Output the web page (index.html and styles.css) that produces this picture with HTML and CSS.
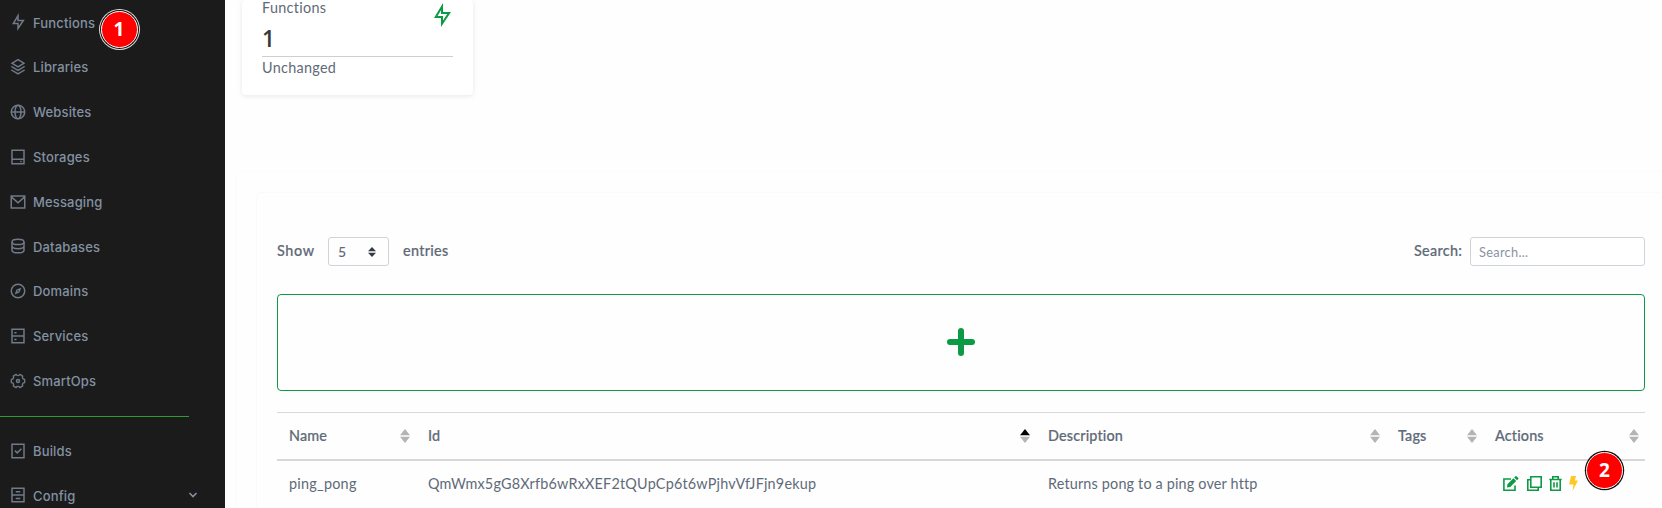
FILE: index.html
```
<!DOCTYPE html>
<html lang="en">
<head>
<meta charset="utf-8">
<title>Functions</title>
<link rel="stylesheet" href="styles.css">
</head>
<body>
<div class="app">
  <nav class="sidebar">
    <a class="item"><svg class="ico" viewBox="0 0 24 24"><path class="fill" d="M13 9h8L11 24v-9H4l9-15v9zm-2 2V7.22L7.532 13H13v4.394L17.263 11H11z"/></svg><span>Functions</span></a>
    <a class="item"><svg class="ico" viewBox="0 0 24 24"><path class="fill" d="M20.083 15.2l1.202.721a.5.5 0 0 1 0 .858l-8.77 5.262a1 1 0 0 1-1.03 0l-8.77-5.262a.5.5 0 0 1 0-.858l1.202-.721L12 20.05l8.083-4.85zm0-4.7l1.202.721a.5.5 0 0 1 0 .858L12 17.65l-9.285-5.571a.5.5 0 0 1 0-.858l1.202-.721L12 15.35l8.083-4.85zm-7.569-9.191l8.771 5.262a.5.5 0 0 1 0 .858L12 13 2.715 7.429a.5.5 0 0 1 0-.858l8.77-5.262a1 1 0 0 1 1.03 0zM12 3.332L5.887 7 12 10.668 18.113 7 12 3.332z"/></svg><span>Libraries</span></a>
    <a class="item"><svg class="ico" viewBox="0 0 24 24"><circle cx="12" cy="12" r="9"/><ellipse cx="12" cy="12" rx="4" ry="9"/><path d="M3 12h18"/></svg><span>Websites</span></a>
    <a class="item"><svg class="ico" viewBox="0 0 24 24"><path d="M4 3h16v18H4zM4 15h16M15 18h2"/></svg><span>Storages</span></a>
    <a class="item"><svg class="ico" viewBox="0 0 24 24"><path d="M3 4h18v16H3zM3.500 5.500L12 13l8.500-7.500"/></svg><span>Messaging</span></a>
    <a class="item"><svg class="ico" viewBox="0 0 24 24"><ellipse cx="12" cy="6.500" rx="8" ry="3.500"/><path d="M4 6.500v11C4 19.500 7.500 21 12 21s8-1.500 8-3.500v-11M4 12c0 2 3.500 3.500 8 3.500s8-1.500 8-3.500"/></svg><span>Databases</span></a>
    <a class="item"><svg class="ico" viewBox="0 0 24 24"><circle cx="12" cy="12" r="9"/><path class="fill" fill-rule="evenodd" d="M16.500 7.500L14 14l-6.500 2.500L10 10zM12 11a1 1 0 1 0 0 2 1 1 0 0 0 0-2z"/></svg><span>Domains</span></a>
    <a class="item"><svg class="ico" viewBox="0 0 24 24"><path d="M4 3h16v18H4zM4 12h16M7 7.500h3M7 16.500h3"/></svg><span>Services</span></a>
    <a class="item"><svg class="ico" viewBox="0 0 24 24"><path transform="translate(1.200 1.200) scale(.9)" d="M2 12c0-.865.11-1.703.316-2.504A3 3 0 0 0 4.99 4.867a9.99 9.99 0 0 1 4.335-2.505 3 3 0 0 0 5.348 0 9.99 9.99 0 0 1 4.335 2.505 3 3 0 0 0 2.675 4.63c.206.8.316 1.638.316 2.503 0 .865-.11 1.703-.316 2.504a3 3 0 0 0-2.675 4.629 9.99 9.99 0 0 1-4.335 2.505 3 3 0 0 0-5.348 0 9.99 9.99 0 0 1-4.335-2.505 3 3 0 0 0-2.675-4.63C2.11 13.704 2 12.866 2 12z"/><circle cx="12" cy="12" r="2"/></svg><span>SmartOps</span></a>
    <div class="rule"></div>
    <a class="item"><svg class="ico" viewBox="0 0 24 24"><path d="M4 3h16v18H4zM8 11.500l3 3 5.500-5.500"/></svg><span>Builds</span></a>
    <a class="item"><svg class="ico" viewBox="0 0 24 24"><path d="M4 3h16v18H4zM4 12h16M9 7.500h6M9 16.500h6"/></svg><span>Config</span><svg class="chev" viewBox="0 0 10 6"><path d="M1.500 1l3.500 3.500L8.500 1"/></svg></a>
  </nav>
  <main class="content">
    <section class="stat">
      <div class="stat-top">
        <div><div class="stat-name">Functions</div><div class="stat-num">1</div></div>
        <svg class="stat-ico" viewBox="0 0 24 24"><path d="M13 9h8L11 24v-9H4l9-15v9zm-2 2V7.22L7.532 13H13v4.394L17.263 11H11z"/></svg>
      </div>
      <div class="stat-foot">Unchanged</div>
    </section>
    <section class="outer"><div class="panel">
      <div class="controls">
        <span class="show">Show</span>
        <div class="select"><span>5</span><svg viewBox="0 0 8 10"><path d="M4 0l4 4.200H0zM4 10l4-4.200H0z"/></svg></div>
        <span class="entries">entries</span>
        <label class="search-label" for="q">Search:</label>
        <input id="q" class="search" placeholder="Search...">
      </div>
      <button class="add" aria-label="Add"><svg viewBox="0 0 28 28"><path d="M14 3v22M3 14h22"/></svg></button>
      <div class="row head">
        <div><span>Name</span><svg class="sort" viewBox="0 0 10 14"><path d="M5 0l5 6.300H0zM5 14l5-6.300H0z"/></svg></div>
        <div><span>Id</span><svg class="sort" viewBox="0 0 10 14"><path class="on" d="M5 0l5 6.300H0z"/><path d="M5 14l5-6.300H0z"/></svg></div>
        <div><span>Description</span><svg class="sort" viewBox="0 0 10 14"><path d="M5 0l5 6.300H0zM5 14l5-6.300H0z"/></svg></div>
        <div><span>Tags</span><svg class="sort" viewBox="0 0 10 14"><path d="M5 0l5 6.300H0zM5 14l5-6.300H0z"/></svg></div>
        <div><span>Actions</span><svg class="sort" viewBox="0 0 10 14"><path d="M5 0l5 6.300H0zM5 14l5-6.300H0z"/></svg></div>
      </div>
      <div class="row body">
        <div><span class="v-name">ping_pong</span></div>
        <div><span class="v-id">QmWmx5gG8Xrfb6wRxXEF2tQUpCp6t6wPjhvVfJFjn9ekup</span></div>
        <div><span class="v-desc">Returns pong to a ping over http</span></div>
        <div></div>
        <div class="actions">
          <svg class="a-edit" viewBox="0 0 17 16"><path class="line" d="M9 3H1.900v11.200H13V9.500"/><path d="M5 11.500l.4-3.200 6-6 2.800 2.800-6 6zM12.200 1.500L13.500.3q.5-.4 1 0l1.800 1.700q.4.500 0 1L15 4.300z"/></svg>
          <svg class="a-copy" viewBox="0 0 15 15"><path class="line" d="M3.800.8h10.400v10.400H3.800zM3.500 3.800H.8v10.400h10.400v-2.700"/></svg>
          <svg class="a-trash" viewBox="0 0 13 15"><path class="line" d="M.3 3.500h12.400M1.800 3.500v10.700h9.400V3.500M3.800 3V.8h5.400V3M5 6.300v5.200M8 6.300v5.200"/></svg>
          <svg class="a-bolt" viewBox="0 0 9 15"><path d="M2 0h5L5.800 4.500H9L3.500 15l1-6.500H.2z"/></svg>
        </div>
      </div>
    </div></section>
  </main>
  <div class="pin pin-one">1</div>
  <div class="pin pin-two">2</div>
</div>
</body>
</html>
```
FILE: styles.css
```
* { box-sizing: border-box; }
body { margin: 0; background: #fefefe; font-family: Lato, "Open Sans", sans-serif; font-size: 14.4px; color: #5f6b78; }
.app { position: relative; display: flex; width: 1662px; height: 508px; overflow: hidden; }
.sidebar { width: 225px; flex: none; background: #1b1b1b; font-family: Inter, sans-serif; font-size: 13px; font-weight: 500; letter-spacing: .15px; color: #8391a2; }
.item { display: flex; align-items: center; height: 44.8px; padding-left: 9px; }
.item span { padding-top: .5px; }
.ico { width: 18px; height: 18px; margin-right: 6px; fill: none; stroke: #707a88; stroke-width: 2; }
.ico .fill { fill: #707a88; stroke: none; }
.rule { width: 189px; height: 1px; margin: 12.800px 0 11.200px; background: #2f9e2f; }
.chev { width: 10px; height: 6px; margin-left: auto; margin-right: 27px; fill: none; stroke: #8391a2; stroke-width: 1.600; }
.content { flex: 1; min-width: 0; }
.stat { width: 231px; height: 95px; margin-left: 17px; padding: 0 20px; background: #fff; border-radius: 4px; box-shadow: 0 1px 5px rgba(90,100,110,.14); }
.stat-top { display: flex; justify-content: space-between; height: 57px; border-bottom: 1px solid #cfcfcf; }
.stat-name { line-height: 16px; letter-spacing: .3px; }
.stat-num { margin-top: 9px; font: 600 22.500px/28px "Open Sans", sans-serif; color: #343a40; }
.stat-ico { width: 24px; height: 24px; margin: 3px -1px 0 0; fill: #0c9a44; }
.stat-foot { line-height: 22px; letter-spacing: .3px; }
.outer { margin: 77px 0 0 12px; height: 360px; padding: 21px 0 0 20px; border-radius: 4px 0 0; box-shadow: 0 0 3px rgba(0,0,0,.04); }
.panel { height: 340px; padding: 44px 17px 0 20px; border-radius: 4px 0 0; box-shadow: 0 0 3px rgba(0,0,0,.05); }
.controls { display: flex; height: 29px; line-height: 28px; align-items: flex-start; font-weight: 500; letter-spacing: .3px; -webkit-text-stroke: .2px #5f6b78; }
.show { width: 51px; letter-spacing: .6px; }
.select { display: flex; justify-content: space-between; align-items: center; width: 61px; height: 29px; padding: 0 12px 0 9px; border: 1px solid #ced4da; border-radius: 3px; font-size: 14px; line-height: 25px; -webkit-text-stroke: 0; }
.select span { padding-bottom: 1px; }
.select svg { width: 8px; height: 10px; fill: #343a40; }
.entries { margin-left: 14px; }
.search-label { margin-left: auto; width: 56px; }
.search { width: 175px; height: 29px; padding: 0 8px; border: 1px solid #ced4da; border-radius: 3px; background: #fff; font: 12.800px Lato, sans-serif; letter-spacing: .3px; -webkit-text-stroke: 0; }
.search::placeholder { color: #8a93a3; }
.add { display: flex; align-items: center; justify-content: center; width: 1368px; height: 97px; margin: 28px 0 21px; padding: 0 0 2px; border: 1px solid #0c9a44; border-radius: 4px; background: transparent; }
.add svg { width: 28px; height: 28px; fill: none; stroke: #0c9a44; stroke-width: 6; stroke-linecap: round; }
.row { display: grid; grid-template-columns: 139px 620px 350px 97px 162px; width: 1368px; }
.row > div { display: flex; align-items: center; padding: 0 6px 0 12px; }
.row span { padding-bottom: 2px; }
.head { height: 49px; border-top: 1px solid #d8d8d8; border-bottom: 2px solid #d8d8d8; font-weight: 500; letter-spacing: .15px; -webkit-text-stroke: .2px #5f6b78; }
.body { height: 46px; }
.v-name { letter-spacing: .25px; }
.v-id { letter-spacing: .2px; }
.v-desc { letter-spacing: .17px; }
.sort { width: 10px; height: 14px; margin-left: auto; fill: #b4b4b4; }
.sort .on { fill: #000; }
.row > .actions { padding-left: 19px; padding-bottom: 1px; fill: #0c9a44; }
.actions .line { fill: none; stroke: #0c9a44; stroke-width: 1.600; }
.a-edit { width: 17px; height: 16px; margin-right: 8px; }
.a-copy { width: 15px; height: 15px; margin-right: 7px; }
.a-trash { width: 13px; height: 15px; margin-right: 7px; }
.a-bolt { width: 9px; height: 15px; fill: #ffc720; }
.pin { position: absolute; width: 37px; height: 37px; border-radius: 50%; background: #f00; border: 1px solid #fff; box-shadow: 0 0 0 1.200px #111; color: #fff; font: 700 19px/35px "Open Sans", sans-serif; text-align: center; }
.pin-one { left: 100.500px; top: 10.500px; box-shadow: 0 0 0 1px #111, 0 0 0 2px #ddd; }
.pin-two { left: 1586px; top: 452px; }
```
